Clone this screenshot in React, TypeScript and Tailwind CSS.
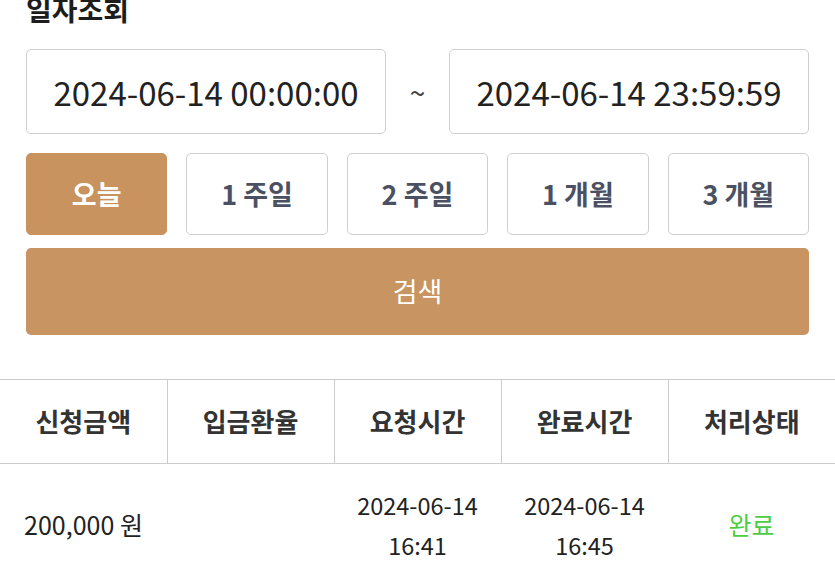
const PERIODS = ["오늘", "1 주일", "2 주일", "1 개월", "3 개월"];
const HEADERS = ["신청금액", "입금환율", "요청시간", "완료시간", "처리상태"];

export default function App() {
  return (
    <div
      className="h-[582px] w-[835px] overflow-hidden bg-white text-[#222]"
      style={{ fontFamily: '"Noto Sans CJK KR", "Noto Sans", sans-serif' }}
    >
      <div className="px-[26px]">
        <h1 className="-mt-[8px] text-[28px] font-bold leading-[34px] text-[#1d1d1d]">일자조회</h1>

        <div className="mt-[23px] flex items-center">
          <div className="flex h-[85px] flex-1 items-center justify-center rounded-[5px] border border-[#cfcfcf] pt-[3px] text-[33px] text-[#222]">
            2024-06-14 00:00:00
          </div>
          <div className="w-[63px] text-center text-[28px] text-[#444]">~</div>
          <div className="flex h-[85px] flex-1 items-center justify-center rounded-[5px] border border-[#cfcfcf] pt-[3px] text-[33px] text-[#222]">
            2024-06-14 23:59:59
          </div>
        </div>

        <div className="mt-[19px] grid grid-cols-5 gap-[19px]">
          {PERIODS.map((p, i) => (
            <button
              key={p}
              className={
                i === 0
                  ? "h-[82px] rounded-[5px] border border-[#c8935f] bg-[#c8935f] text-[27px] font-bold text-white"
                  : "h-[82px] rounded-[5px] border border-[#cfcfcf] bg-white text-[27px] font-bold text-[#4b5162]"
              }
            >
              {p}
            </button>
          ))}
        </div>

        <button className="mt-[13px] h-[87px] w-full rounded-[5px] bg-[#c79462] text-[27px] text-white">검색</button>
      </div>

      <table className="mt-[44px] w-full table-fixed border-collapse">
        <thead>
          <tr className="border-y border-[#cccccc]">
            {HEADERS.map((h, i) => (
              <th
                key={h}
                className={`h-[84px] pb-[3px] text-[26px] font-bold text-[#333] ${i < 4 ? "border-r border-[#cccccc]" : ""}`}
              >
                {h}
              </th>
            ))}
          </tr>
        </thead>
        <tbody>
          <tr className="text-[23.5px] text-[#222]">
            <td className="h-[122px] text-center text-[25px]">200,000 원</td>
            <td />
            <td className="text-center leading-[40px]">
              2024-06-14
              <br />
              16:41
            </td>
            <td className="text-center leading-[40px]">
              2024-06-14
              <br />
              16:45
            </td>
            <td className="text-center text-[25px] text-[#4ccd3f]">완료</td>
          </tr>
        </tbody>
      </table>
    </div>
  );
}
